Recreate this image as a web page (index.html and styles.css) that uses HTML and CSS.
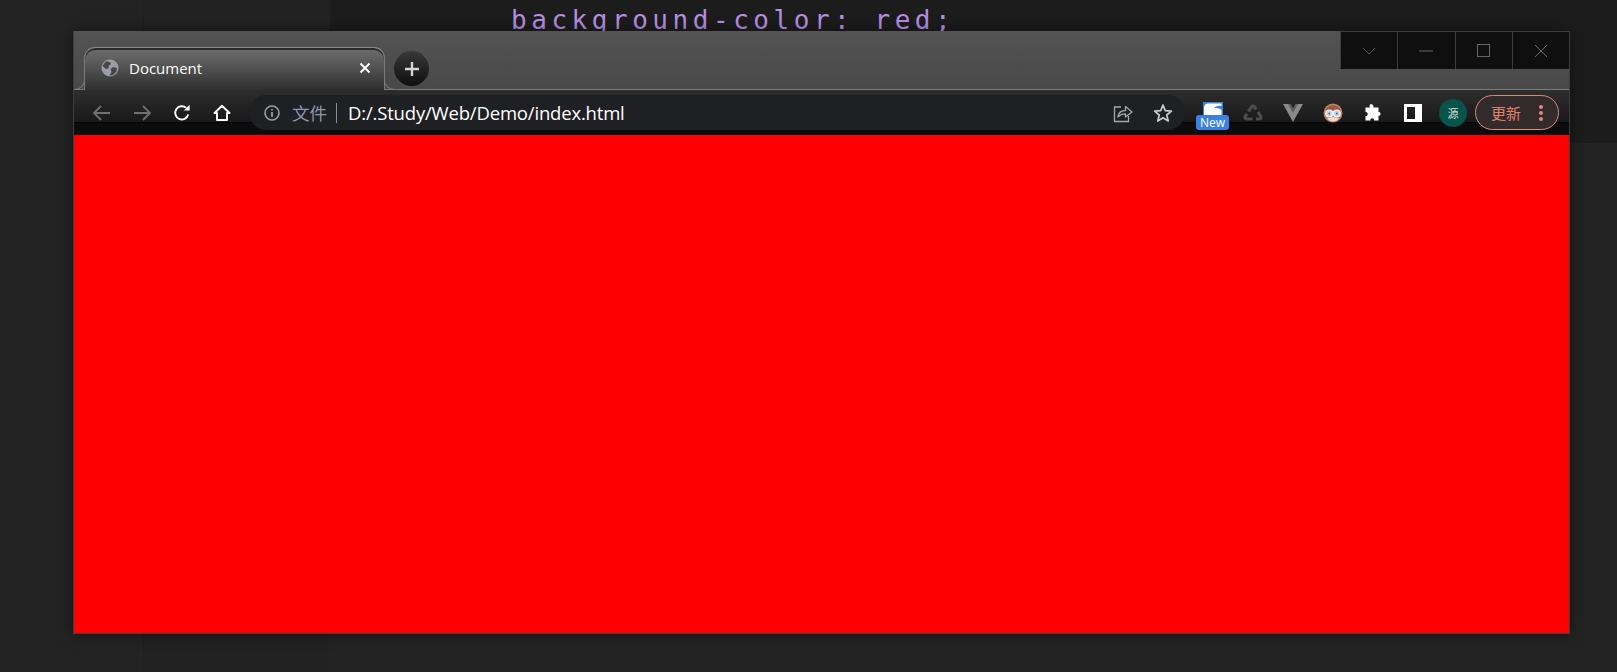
FILE: index.html
```html
<!DOCTYPE html>
<html lang="en">
<head>
  <meta charset="UTF-8">
  <meta name="viewport" content="width=device-width, initial-scale=1.0">
  <title>Document</title>
  <link rel="stylesheet" href="styles.css">
</head>
<body>

  <div class="desktop">
    <!-- editor behind the browser window -->
    <div class="editor">
      <div class="pane-activity"></div>
      <div class="pane-files"></div>
      <div class="pane-code">
        <div class="code-line">background-color: red;</div>
      </div>
    </div>

    <div class="window">
      <div class="tabstrip">
        <div class="tab">
          <svg class="tab-icon" width="18" height="18" viewBox="0 0 18 18">
            <circle cx="9" cy="9" r="8.5" fill="#9a9fa7"/>
            <path d="M5 2.2 L9 3 L10 5 L7.5 7 L8 9 L5 10 L1.5 7 Z" fill="#47474a"/>
            <path d="M16 9 L12 8 L9.5 10 L10.5 13 L8.5 16.5 L12 16 L15.5 12.5 Z" fill="#47474a"/>
          </svg>
          <span class="tab-title">Document</span>
          <svg class="tab-close" width="12" height="12" viewBox="0 0 12 12">
            <path d="M1.5 1.5 L10.5 10.5 M10.5 1.5 L1.5 10.5" stroke="#fff" stroke-width="1.8"/>
          </svg>
        </div>
        <div class="new-tab">
          <svg width="16" height="16" viewBox="0 0 16 16">
            <path d="M8 1 V15 M1 8 H15" stroke="#d2d4d8" stroke-width="2.4"/>
          </svg>
        </div>
        <div class="controls">
          <div class="control">
            <svg width="14" height="8" viewBox="0 0 14 8"><path d="M1 1 L7 7 L13 1" fill="none" stroke="#555" stroke-width="1"/></svg>
          </div>
          <div class="control">
            <svg width="14" height="2" viewBox="0 0 14 2"><path d="M0 1 H14" stroke="#666" stroke-width="1"/></svg>
          </div>
          <div class="control">
            <svg width="13" height="13" viewBox="0 0 13 13"><rect x="0.5" y="0.5" width="12" height="12" fill="none" stroke="#666"/></svg>
          </div>
          <div class="control">
            <svg width="14" height="14" viewBox="0 0 14 14"><path d="M1 1 L13 13 M13 1 L1 13" stroke="#666" stroke-width="1"/></svg>
          </div>
        </div>
      </div>

      <div class="toolbar">
        <div class="tool">
          <svg width="20" height="18" viewBox="0 0 20 18"><path d="M18 9 H2 M9 2 L2 9 L9 16" fill="none" stroke="#6f7073" stroke-width="1.8"/></svg>
        </div>
        <div class="tool">
          <svg width="20" height="18" viewBox="0 0 20 18"><path d="M2 9 H18 M11 2 L18 9 L11 16" fill="none" stroke="#6f7073" stroke-width="1.8"/></svg>
        </div>
        <div class="tool">
          <svg width="18" height="18" viewBox="0 0 18 18">
            <path d="M15.2 10.5 A6.6 6.6 0 1 1 13.2 3.9" fill="none" stroke="#fff" stroke-width="1.9"/>
            <path d="M10.8 6.4 H16.6 V0.8 Z" fill="#fff"/>
          </svg>
        </div>
        <div class="tool">
          <svg width="18" height="18" viewBox="0 0 18 18"><path d="M1.5 9 L9 1.8 L16.5 9 H14 V16 H4 V9 Z" fill="none" stroke="#fff" stroke-width="1.9" stroke-linejoin="round"/></svg>
        </div>

        <div class="omnibox">
          <svg class="omni-info" width="16" height="16" viewBox="0 0 16 16">
            <circle cx="8" cy="8" r="7" fill="none" stroke="#9a9da2" stroke-width="1.6"/>
            <path d="M8 7 V12 M8 4 V5.6" stroke="#9a9da2" stroke-width="1.8"/>
          </svg>
          <span class="omni-scheme">文件</span>
          <span class="omni-sep"></span>
          <span class="omni-url">D:/.Study/Web/Demo/index.html</span>
          <span class="omni-actions">
            <svg width="20" height="20" viewBox="0 0 20 20">
              <path d="M8 4 H1.5 V18.5 H15.5 V13" fill="none" stroke="#a4a6aa" stroke-width="1.3"/>
              <path d="M5 14 C5.5 9.5 8.5 7.5 12.5 7.5 V3.5 L19 9 L12.5 14 V10.8 C9.5 10.8 7 11.5 5 14 Z" fill="none" stroke="#a4a6aa" stroke-width="1.3" stroke-linejoin="round"/>
            </svg>
            <svg width="20" height="20" viewBox="0 0 20 20">
              <path d="M10 2 L12.3 7.6 L18.4 8.1 L13.8 12 L15.2 18 L10 14.8 L4.8 18 L6.2 12 L1.6 8.1 L7.7 7.6 Z" fill="none" stroke="#c8cace" stroke-width="1.7" stroke-linejoin="round"/>
            </svg>
          </span>
        </div>

        <div class="ext ext-first">
          <svg class="ext-logo" width="20" height="13" viewBox="0 0 20 13">
            <rect width="20" height="13" fill="#3b82e0"/>
            <path d="M1 7 C1 2.5 3 1.5 6 1.5 H18.5 V4 C14.5 3.5 12.5 4.5 11 6.5 C14 5.5 17 6.5 18.5 8 V13 H1 Z" fill="#fff"/>
          </svg>
          <span class="ext-badge">New</span>
        </div>
        <div class="ext">
          <svg width="20" height="20" viewBox="0 0 20 20" fill="none" stroke="#4d4d4d" stroke-width="3.2">
            <path d="M5.5 8.5 L8.5 3.8 Q10 2.2 11.5 3.8 L13 6.5"/>
            <path d="M15 9 L17.8 13.5 Q18.6 16 16 16 H13"/>
            <path d="M9.5 16 H4 Q1.4 16 2.2 13.5 L4 10.8"/>
          </svg>
        </div>
        <div class="ext">
          <svg width="20" height="18" viewBox="0 0 20 18">
            <path d="M0 0 H7 L10 5 L13 0 H20 L10 18 Z" fill="#8a8a8a"/>
            <path d="M5 0 H7.5 L10 4.5 L12.5 0 H15 L10 9 Z" fill="#5f5f5f"/>
          </svg>
        </div>
        <div class="ext">
          <svg width="20" height="20" viewBox="0 0 20 20">
            <circle cx="10" cy="10" r="9.5" fill="#c07c5e"/>
            <path d="M2.5 7 C5 0.5 15 0.5 17.5 7 L14 7.5 H6 Z" fill="#9a5a48"/>
            <path d="M4 15.5 C7 19.5 13 19.5 16 15.5 L10 14 Z" fill="#e6dcd4"/>
            <circle cx="6.2" cy="10.5" r="3.4" fill="#bcd6e6" stroke="#f4f4f4" stroke-width="1.3"/>
            <circle cx="13.8" cy="10.5" r="3.4" fill="#bcd6e6" stroke="#f4f4f4" stroke-width="1.3"/>
            <circle cx="6.2" cy="10.5" r="0.9" fill="#4a6a82"/>
            <circle cx="13.8" cy="10.5" r="0.9" fill="#4a6a82"/>
          </svg>
        </div>
        <div class="ext ext-puzzle">
          <svg width="20" height="20" viewBox="0 0 20 20">
            <path d="M8 1.5 C10 0.5 12 2 11.5 4.5 H16.5 V9 C19 8.5 19.5 13 16.5 12.8 V17.5 H12 C12.4 14.5 8 14.5 8.4 17.5 H3.5 V13 C6.5 13.4 6.5 8.5 3.5 9 V4.5 H8 C7.5 3.5 7.5 2 8 1.5 Z" fill="#fff"/>
          </svg>
        </div>
        <div class="ext">
          <svg width="18" height="18" viewBox="0 0 18 18">
            <path d="M0 0 H18 V18 H0 Z M3 3 V15 H11 V3 Z" fill="#fff" fill-rule="evenodd"/>
          </svg>
        </div>
        <div class="ext">
          <div class="profile">源</div>
        </div>
        <div class="update">
          <span class="update-text">更新</span>
          <svg width="6" height="18" viewBox="0 0 6 18" fill="#d98b7c">
            <circle cx="3" cy="3" r="2"/><circle cx="3" cy="9" r="2"/><circle cx="3" cy="15" r="2"/>
          </svg>
        </div>
      </div>

      <div class="viewport"></div>
    </div>
  </div>

</body>
</html>
```

FILE: styles.css
```css
* {
  box-sizing: border-box;
}

html, body {
  margin: 0;
  height: 100%;
  overflow: hidden;
  background-color: #232323;
}

.desktop {
  position: relative;
  width: 1617px;
  height: 672px;
  overflow: hidden;
}

/* editor */
.editor {
  display: grid;
  grid-template-columns: 144px 186px 1fr;
  height: 100%;
}

.pane-activity {
  background-color: #232323;
  border-right: 1px solid #1f1f1f;
}

.pane-files {
  background-color: #222222;
}

.pane-code {
  background: linear-gradient(#1c1c1c 0, #1c1c1c 143px, #232323 143px);
  padding: 0 0 0 181px;
}

.code-line {
  font-family: "DejaVu Sans Mono", "Liberation Mono", monospace;
  font-size: 26px;
  line-height: 40px;
  letter-spacing: 4.54px;
  color: #b78ee0;
  white-space: pre;
}

/* browser window */
.window {
  position: absolute;
  left: 73px;
  top: 31px;
  width: 1497px;
  height: 603px;
  display: flex;
  flex-direction: column;
  border: 1px solid #3d3d3d;
  border-top: none;
  box-shadow: 0 0 14px rgba(0, 0, 0, 0.45);
}

.tabstrip {
  display: flex;
  flex: none;
  height: 59px;
  padding-left: 10px;
  background: linear-gradient(#535353, #494949);
  border-bottom: 1px solid #7c7c7c;
}

.tab {
  position: relative;
  display: flex;
  align-items: center;
  align-self: flex-end;
  width: 301px;
  height: 43px;
  margin-bottom: -1px;
  padding: 0 13px 2px 16px;
  background: linear-gradient(#6c6c6c, #606060 25%, #2f2f2f);
  border: 1px solid #7a7a7a;
  border-top-color: #8a8a8a;
  border-bottom: none;
  border-radius: 11px 11px 0 0;
  box-shadow: inset 0 2px 0 #2a2a2a;
}

.tab::before,
.tab::after {
  content: "";
  position: absolute;
  bottom: 0;
  width: 10px;
  height: 10px;
  border-bottom: 1px solid #7c7c7c;
}

.tab::before {
  left: -11px;
  border-right: 1px solid #7a7a7a;
  border-bottom-right-radius: 10px;
}

.tab::after {
  right: -11px;
  border-left: 1px solid #7a7a7a;
  border-bottom-left-radius: 10px;
}

.tab-title {
  flex: 1;
  margin-left: 10px;
  font-family: "Open Sans", Arial, sans-serif;
  font-size: 15px;
  color: #ffffff;
}

.new-tab {
  display: flex;
  align-items: center;
  justify-content: center;
  align-self: flex-start;
  width: 35px;
  height: 35px;
  margin: 20px 0 0 9px;
  border-radius: 50%;
  background: linear-gradient(#383838, #0f0f0f);
}

.controls {
  display: flex;
  align-self: flex-start;
  width: 229px;
  height: 38px;
  margin-left: auto;
  background-color: #0f0f0f;
  border-top: 1px solid #3c3c3c;
}

.control {
  display: flex;
  align-items: center;
  justify-content: center;
  flex: 1;
  border-left: 1px solid #3c3c3c;
}

/* toolbar */
.toolbar {
  display: flex;
  flex: none;
  align-items: center;
  height: 45px;
  padding: 0 0 0 8px;
  background: linear-gradient(#2d2d2d 0, #191919 32px, #050505 32px, #050505 33px, #0c0c0c 33px, #0c0c0c 45px);
}

.tool,
.ext {
  position: relative;
  display: flex;
  align-items: center;
  justify-content: center;
  flex: none;
  width: 40px;
  height: 35px;
}

.ext-puzzle {
  padding-right: 2px;
}

.omnibox {
  display: flex;
  align-items: center;
  flex: none;
  width: 936px;
  height: 35px;
  margin: 0 8px 0 7px;
  padding-left: 15px;
  background-color: #1f2023;
  border-radius: 18px;
}

.omni-scheme {
  margin-left: 12px;
  font-family: "Noto Sans CJK SC", sans-serif;
  font-size: 17.5px;
  color: #8f95b5;
}

.omni-sep {
  width: 1px;
  height: 20px;
  margin: 0 11px 0 9px;
  background-color: #8d8f94;
}

.omni-url {
  font-family: "Open Sans", Arial, sans-serif;
  font-size: 18.5px;
  letter-spacing: -0.18px;
  color: #ffffff;
}

.omni-actions {
  display: flex;
  gap: 20px;
  margin-left: auto;
  padding-right: 12px;
}

.ext-logo {
  position: absolute;
  top: 7px;
  left: 10px;
}

.ext-badge {
  position: absolute;
  top: 20px;
  left: 3px;
  width: 33px;
  height: 15px;
  border-radius: 3px;
  background-color: #3b82e0;
  font-family: "Open Sans", Arial, sans-serif;
  font-size: 12px;
  line-height: 15px;
  text-align: center;
  color: #ffffff;
}

.profile {
  width: 28px;
  height: 28px;
  border-radius: 50%;
  background-color: #07544a;
  font-family: "Noto Sans CJK SC", sans-serif;
  font-size: 11px;
  line-height: 28px;
  text-align: center;
  color: #d8dcdc;
}

.update {
  display: flex;
  align-items: center;
  flex: none;
  width: 84px;
  height: 35px;
  margin-left: 2px;
  padding: 0 14px 0 15px;
  justify-content: space-between;
  background-color: #332b2b;
  border: 1px solid #d98b7c;
  border-radius: 18px;
}

.update-text {
  font-family: "Noto Sans CJK SC", sans-serif;
  font-size: 15px;
  color: #e0806c;
}

.viewport {
  flex: 1;
  background-color: #ff0000;
}
```
